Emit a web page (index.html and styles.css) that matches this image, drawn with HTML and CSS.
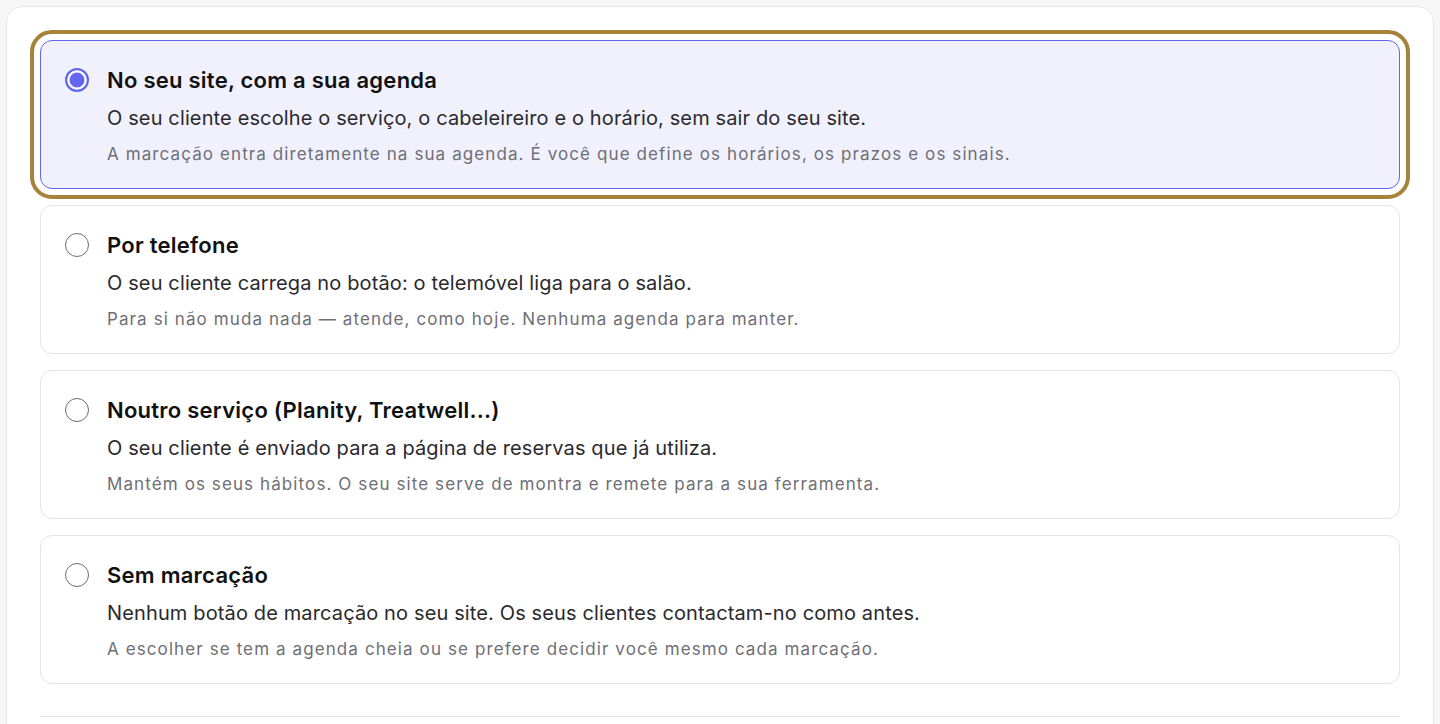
FILE: index.html
```html
<!DOCTYPE html>
<html lang="pt">
<head>
    <meta charset="UTF-8">
    <meta name="viewport" content="width=device-width, initial-scale=1.0">
    <title>Marcação</title>
    <link rel="stylesheet" href="styles.css">
</head>
<body>
    <div class="page">
        <div class="panel">
            <div class="options">
                <!-- Selected option -->
                <label class="option selected">
                    <input type="radio" name="booking" class="option-radio" checked>
                    <div class="option-text">
                        <div class="option-title">No seu site, com a sua agenda</div>
                        <div class="option-desc">O seu cliente escolhe o serviço, o cabeleireiro e o horário, sem sair do seu site.</div>
                        <div class="option-note">A marcação entra diretamente na sua agenda. É você que define os horários, os prazos e os sinais.</div>
                    </div>
                </label>

                <label class="option">
                    <input type="radio" name="booking" class="option-radio">
                    <div class="option-text">
                        <div class="option-title">Por telefone</div>
                        <div class="option-desc">O seu cliente carrega no botão: o telemóvel liga para o salão.</div>
                        <div class="option-note">Para si não muda nada — atende, como hoje. Nenhuma agenda para manter.</div>
                    </div>
                </label>

                <label class="option">
                    <input type="radio" name="booking" class="option-radio">
                    <div class="option-text">
                        <div class="option-title">Noutro serviço (Planity, Treatwell...)</div>
                        <div class="option-desc">O seu cliente é enviado para a página de reservas que já utiliza.</div>
                        <div class="option-note">Mantém os seus hábitos. O seu site serve de montra e remete para a sua ferramenta.</div>
                    </div>
                </label>

                <label class="option">
                    <input type="radio" name="booking" class="option-radio">
                    <div class="option-text">
                        <div class="option-title">Sem marcação</div>
                        <div class="option-desc">Nenhum botão de marcação no seu site. Os seus clientes contactam-no como antes.</div>
                        <div class="option-note">A escolher se tem a agenda cheia ou se prefere decidir você mesmo cada marcação.</div>
                    </div>
                </label>
            </div>

            <div class="panel-footer"></div>
        </div>
    </div>
</body>
</html>
```

FILE: styles.css
```css
body {
    margin: 0;
    font-family: Inter, "Noto Sans", sans-serif;
    background-color: #f6f6f7;
    color: #111;
}

.page {
    padding: 6px 6px 0;
    height: 718px;
    overflow: hidden;
}

.panel {
    background: white;
    border: 1px solid #e6e6e8;
    border-radius: 16px;
    padding: 33px 33px 60px;
}

.options {
    display: flex;
    flex-direction: column;
    gap: 16px;
}

/* One choice card */
.option {
    display: flex;
    align-items: flex-start;
    gap: 18px;
    padding: 24px 24px 22px;
    border: 1px solid #e4e4e7;
    border-radius: 12px;
    background: white;
    cursor: pointer;
}

.option.selected {
    background: #f1f1fe;
    border-color: #6366f1;
    outline: 4px solid #a6823b;
    outline-offset: 6px;
}

.option-radio {
    appearance: none;
    -webkit-appearance: none;
    flex-shrink: 0;
    width: 24px;
    height: 24px;
    margin: 3px 0 0;
    border: 1.5px solid #6b6b70;
    border-radius: 50%;
    background: white;
}

.option-radio:checked {
    border: 2px solid #6366f1;
    background: #6366f1;
    box-shadow: inset 0 0 0 2.5px white;
}

.option-title {
    font-size: 22px;
    font-weight: 600;
    line-height: 30px;
    letter-spacing: 0.25px;
    color: #111;
}

.option-desc {
    margin-top: 9px;
    font-size: 20px;
    line-height: 28px;
    letter-spacing: 0.13px;
    color: #2a2a2e;
}

.option-note {
    margin-top: 10px;
    font-size: 17px;
    line-height: 24px;
    letter-spacing: 1.1px;
    color: #6e6e76;
}

.panel-footer {
    margin-top: 32px;
    border-top: 1px solid #e4e4e7;
}
```
